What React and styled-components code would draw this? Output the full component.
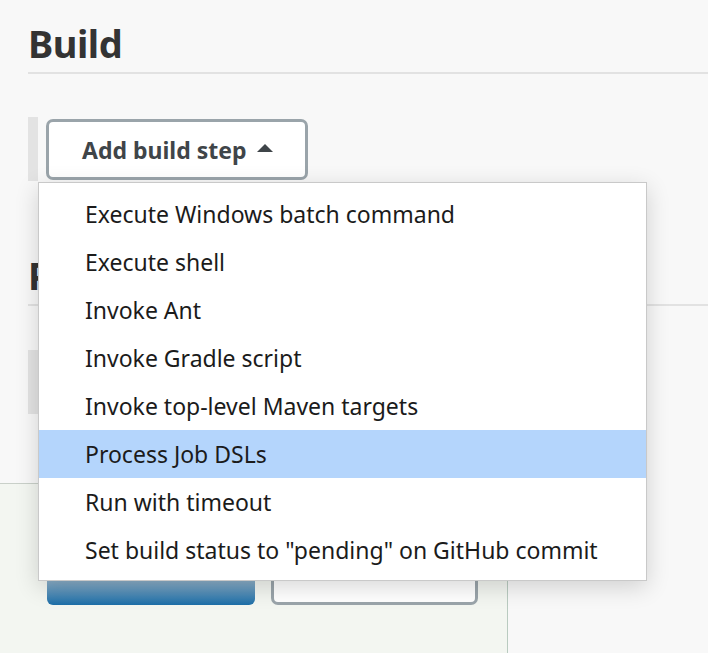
import styled, { createGlobalStyle } from "styled-components";

const GlobalStyle = createGlobalStyle`
  html, body {
    margin: 0;
    padding: 0;
    background: #f8f8f8;
    font-family: "Noto Sans", "Open Sans", sans-serif;
    color: #333;
  }
`;

const steps = [
  "Execute Windows batch command",
  "Execute shell",
  "Invoke Ant",
  "Invoke Gradle script",
  "Invoke top-level Maven targets",
  "Process Job DSLs",
  "Run with timeout",
  'Set build status to "pending" on GitHub commit',
];

export default function App() {
  return (
    <Page>
      <GlobalStyle />
      <Section>
        <Heading>Build</Heading>
        <Repeatable>
          <Handle />
          <DropdownWrap>
            <AddButton>
              Add build step <Caret />
            </AddButton>
            <Menu>
              {steps.map((s, i) => (
                <MenuItem key={s} $active={i === 5}>
                  {s}
                </MenuItem>
              ))}
            </Menu>
          </DropdownWrap>
        </Repeatable>
      </Section>
      <Section $second>
        <Heading>Post-build Actions</Heading>
        <Repeatable $gap="44px">
          <Handle />
          <AddButton>Add post-build action</AddButton>
        </Repeatable>
      </Section>
      <BottomBar>
        <SaveButton>Save</SaveButton>
        <ApplyButton>Apply</ApplyButton>
      </BottomBar>
    </Page>
  );
}

const Page = styled.div`
  width: 708px;
  height: 653px;
  overflow: hidden;
  display: flex;
  flex-direction: column;
`;

const Section = styled.div`
  padding-left: 28px;
  padding-top: ${(p) => (p.$second ? "65px" : "14px")};
`;

const Heading = styled.h2`
  margin: 0;
  font-size: 38px;
  font-weight: 700;
  line-height: 58px;
  color: #333;
  border-bottom: 2px solid #e2e2e2;
  letter-spacing: -0.5px;
`;

const Repeatable = styled.div`
  display: flex;
  align-items: flex-start;
  margin-top: ${(p) => p.$gap || "43px"};
`;

const Handle = styled.div`
  width: 10px;
  height: 64px;
  background: #e3e3e3;
  margin-right: 8px;
`;

const DropdownWrap = styled.div`
  position: relative;
`;

const AddButton = styled.button`
  display: flex;
  align-items: center;
  gap: 10px;
  height: 61px;
  padding: 0 32px 0 33px;
  margin-top: 2px;
  border: 3px solid #9aa4aa;
  border-radius: 7px;
  background: #fff;
  font-family: "Noto Sans", "Open Sans", sans-serif;
  font-size: 23px;
  font-weight: 700;
  color: #3f4549;
  white-space: nowrap;
`;

const Caret = styled.span`
  width: 0;
  height: 0;
  border-left: 8px solid transparent;
  border-right: 8px solid transparent;
  border-bottom: 8px solid #3f4549;
  margin-bottom: 3px;
`;

const Menu = styled.ul`
  position: absolute;
  top: 65px;
  left: -8px;
  width: 607px;
  margin: 0;
  padding: 7px 0 6px;
  list-style: none;
  background: #fff;
  border: 1px solid #c9c9c9;
  box-shadow: 0 6px 22px rgba(0, 0, 0, 0.16);
  z-index: 10;
`;

const MenuItem = styled.li`
  height: 48px;
  display: flex;
  align-items: center;
  padding-left: 46px;
  font-size: 23px;
  color: #1b1b1b;
  background: ${(p) => (p.$active ? "#b4d5fc" : "transparent")};
  white-space: nowrap;
`;

const BottomBar = styled.div`
  margin-top: auto;
  width: 508px;
  height: 170px;
  box-sizing: border-box;
  border-top: 1px solid #c9d0c9;
  border-right: 1px solid #b9cbc0;
  background: #f3f6f1;
  display: flex;
  gap: 16px;
  padding: 37px 0 0 47px;
`;

const SaveButton = styled.button`
  width: 208px;
  height: 84px;
  border: none;
  border-radius: 6px;
  background: linear-gradient(#e8eef2 40%, #8fb0c8 70%, #1c6ea8);
  color: #fff;
  font-family: "Noto Sans", sans-serif;
  font-size: 20px;
  font-weight: 700;
`;

const ApplyButton = styled.button`
  width: 207px;
  height: 84px;
  border: 3px solid #9aa4aa;
  border-radius: 7px;
  background: #fff;
  color: #3f4549;
  font-family: "Noto Sans", sans-serif;
  font-size: 20px;
  font-weight: 700;
`;
